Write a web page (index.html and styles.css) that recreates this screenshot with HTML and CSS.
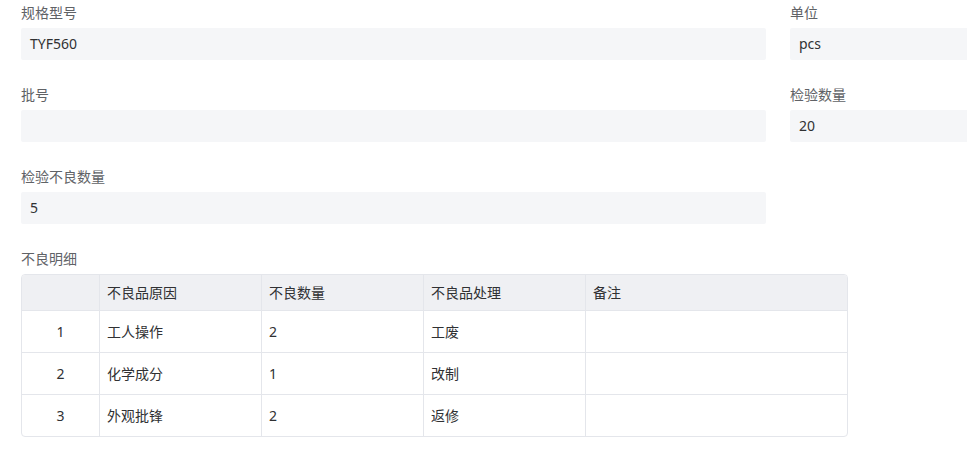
FILE: index.html
```html
<!DOCTYPE html>
<html lang="zh-CN">
<head>
  <meta charset="UTF-8">
  <title>检验详情</title>
  <link rel="stylesheet" href="styles.css">
</head>
<body class="inspect-page">
  <div class="form">
    <div class="form-row">
      <div class="form-item">
        <label class="item-label">规格型号</label>
        <div class="item-value">TYF560</div>
      </div>
      <div class="form-item">
        <label class="item-label">单位</label>
        <div class="item-value edge">pcs</div>
      </div>
    </div>

    <div class="form-row">
      <div class="form-item">
        <label class="item-label">批号</label>
        <div class="item-value"></div>
      </div>
      <div class="form-item">
        <label class="item-label">检验数量</label>
        <div class="item-value edge">20</div>
      </div>
    </div>

    <div class="form-row">
      <div class="form-item">
        <label class="item-label">检验不良数量</label>
        <div class="item-value">5</div>
      </div>
    </div>

    <div class="form-item detail">
      <label class="item-label">不良明细</label>
      <div class="table-wrap">
        <table class="detail-table">
          <colgroup>
            <col style="width: 78px">
            <col style="width: 162px">
            <col style="width: 162px">
            <col style="width: 162px">
            <col style="width: 261px">
          </colgroup>
          <thead>
            <tr>
              <th></th>
              <th>不良品原因</th>
              <th>不良数量</th>
              <th>不良品处理</th>
              <th>备注</th>
            </tr>
          </thead>
          <tbody>
            <tr>
              <td class="idx">1</td>
              <td>工人操作</td>
              <td>2</td>
              <td>工废</td>
              <td></td>
            </tr>
            <tr>
              <td class="idx">2</td>
              <td>化学成分</td>
              <td>1</td>
              <td>改制</td>
              <td></td>
            </tr>
            <tr>
              <td class="idx">3</td>
              <td>外观批锋</td>
              <td>2</td>
              <td>返修</td>
              <td></td>
            </tr>
          </tbody>
        </table>
      </div>
    </div>
  </div>
</body>
</html>
```

FILE: styles.css
```css
body.inspect-page {
  margin: 0;
  padding: 3px 0 0 21px;
  background: #ffffff;
  color: #303133;
  font-family: "Noto Sans", "Noto Sans CJK SC", sans-serif;
  font-size: 14px;
  overflow: hidden;
}

.form-row {
  display: grid;
  grid-template-columns: 745px 1fr;
  column-gap: 24px;
}

.form-item {
  margin-bottom: 25px;
}

.item-label {
  display: block;
  height: 20px;
  line-height: 20px;
  margin-bottom: 5px;
  color: #606266;
}

.item-value {
  height: 32px;
  line-height: 32px;
  padding: 0 9px;
  background: #f5f6f8;
  border-radius: 2px;
  color: #303133;
}

/* box runs on past the window edge */
.item-value.edge {
  border-radius: 2px 0 0 2px;
}

.table-wrap {
  width: 825px;
  border: 1px solid #e4e6eb;
  border-radius: 4px;
  overflow: hidden;
}

.detail-table {
  width: 825px;
  table-layout: fixed;
  border-collapse: separate;
  border-spacing: 0;
}

.detail-table th,
.detail-table td {
  padding: 0 0 0 7px;
  text-align: left;
  font-weight: normal;
  border-right: 1px solid #e4e6eb;
  border-bottom: 1px solid #e4e6eb;
}

.detail-table th:last-child,
.detail-table td:last-child {
  border-right: none;
}

.detail-table th {
  line-height: 35px;
  background: #eff0f3;
  color: #303133;
}

.detail-table td {
  line-height: 41px;
}

.detail-table tbody tr:last-child td {
  border-bottom: none;
}

.detail-table td.idx {
  padding: 0;
  text-align: center;
}
```
